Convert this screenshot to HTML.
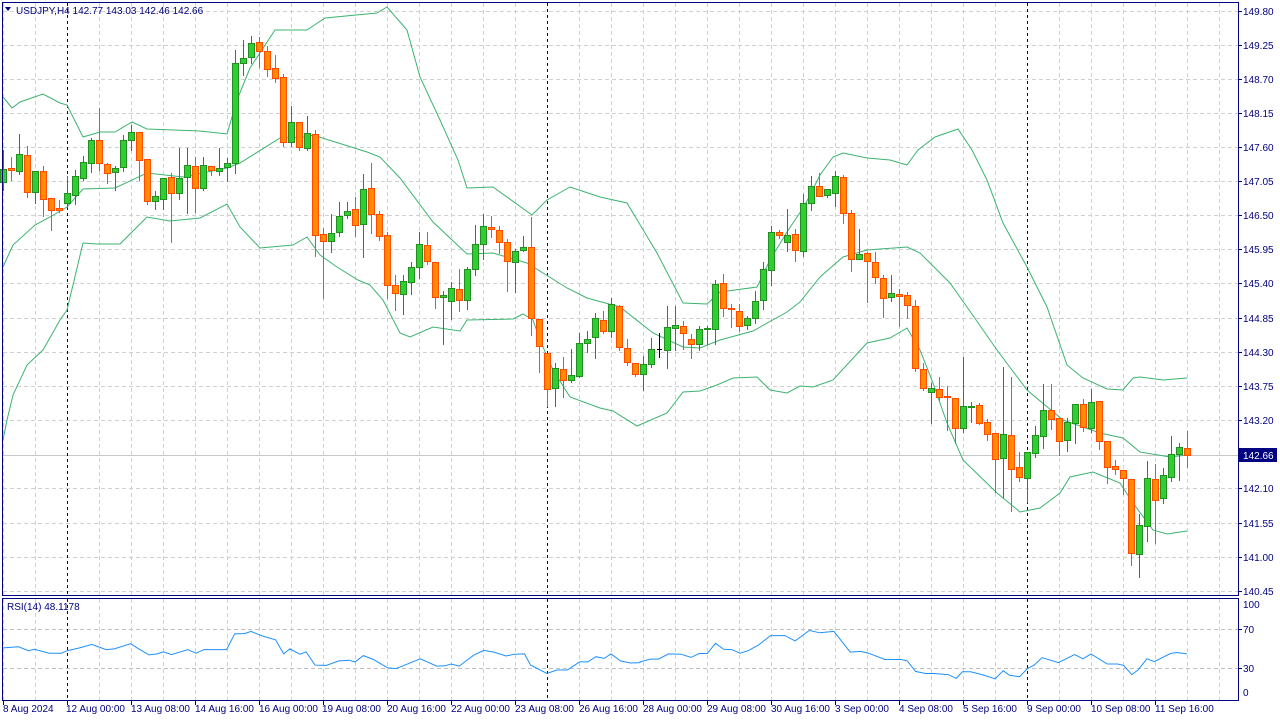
<!DOCTYPE html>
<html><head><meta charset="utf-8">
<style>
html,body{margin:0;padding:0;background:#fff;}
body{width:1280px;height:720px;overflow:hidden;position:relative;font-family:"Liberation Sans",Arial,sans-serif;}
svg{position:absolute;left:0;top:0;}
svg text{font-family:"Liberation Sans",Arial,sans-serif;font-size:10px;fill:#000080;}
</style></head><body>
<svg id="s" width="1280" height="720" xmlns="http://www.w3.org/2000/svg">
<g id="grid"></g>
<g id="bands" fill="none" stroke="#3cb371" stroke-width="1"></g>
<g id="cand"></g>
<g id="rsi" fill="none" stroke="#1e90ff" stroke-width="1"></g>
<g id="frame" fill="none" stroke="#000080" stroke-width="1">
<rect x="2.5" y="2.5" width="1236" height="593"/>
<rect x="2.5" y="598.5" width="1236" height="102"/>
</g>
<polygon points="5,7 11,7 8,11" fill="#000080"/>
<text x="16" y="14">USDJPY,H4  142.77 143.03 142.46 142.66</text>
<text x="7" y="610">RSI(14) 48.1178</text>
<g id="ticks" stroke="#000080"></g>
<text x="1243" y="15">149.80</text>
<text x="1243" y="49">149.25</text>
<text x="1243" y="83">148.70</text>
<text x="1243" y="117">148.15</text>
<text x="1243" y="151">147.60</text>
<text x="1243" y="185">147.05</text>
<text x="1243" y="219">146.50</text>
<text x="1243" y="253">145.95</text>
<text x="1243" y="287">145.40</text>
<text x="1243" y="322">144.85</text>
<text x="1243" y="356">144.30</text>
<text x="1243" y="390">143.75</text>
<text x="1243" y="424">143.20</text>
<rect x="1239" y="448" width="38" height="14" fill="#000080"/>
<text x="1243" y="459" style="fill:#fff">142.66</text>
<text x="1243" y="492">142.10</text>
<text x="1243" y="527">141.55</text>
<text x="1243" y="561">141.00</text>
<text x="1243" y="595">140.45</text>
<text x="1243" y="608">100</text>
<text x="1243" y="633">70</text>
<text x="1243" y="672">30</text>
<text x="1243" y="696">0</text>
<text x="3" y="712">8 Aug 2024</text>
<text x="66" y="712">12 Aug 00:00</text>
<text x="131" y="712">13 Aug 08:00</text>
<text x="195" y="712">14 Aug 16:00</text>
<text x="259" y="712">16 Aug 00:00</text>
<text x="322" y="712">19 Aug 08:00</text>
<text x="387" y="712">20 Aug 16:00</text>
<text x="451" y="712">22 Aug 00:00</text>
<text x="515" y="712">23 Aug 08:00</text>
<text x="579" y="712">26 Aug 16:00</text>
<text x="643" y="712">28 Aug 00:00</text>
<text x="707" y="712">29 Aug 08:00</text>
<text x="771" y="712">30 Aug 16:00</text>
<text x="835" y="712">3 Sep 00:00</text>
<text x="899" y="712">4 Sep 08:00</text>
<text x="963" y="712">5 Sep 16:00</text>
<text x="1027" y="712">9 Sep 00:00</text>
<text x="1091" y="712">10 Sep 08:00</text>
<text x="1155" y="712">11 Sep 16:00</text>
</svg>
<script>
var NS="http://www.w3.org/2000/svg";
function el(p,t,a){var e=document.createElementNS(NS,t);for(var k in a)e.setAttribute(k,a[k]);document.getElementById(p).appendChild(e);return e;}
// grid
var hy=[11,45,79,113,147,181,215,249,283,318,352,386,420,488,523,557,591];
hy.forEach(function(y){el("grid","line",{x1:3,x2:1238,y1:y+.5,y2:y+.5,stroke:"#d0d0d0","stroke-dasharray":"4,3"});el("ticks","line",{x1:1238,x2:1242,y1:y+.5,y2:y+.5});});
[629,668].forEach(function(y){el("grid","line",{x1:3,x2:1238,y1:y+.5,y2:y+.5,stroke:"#c0c0c0","stroke-dasharray":"4,3"});el("ticks","line",{x1:1238,x2:1242,y1:y+.5,y2:y+.5});});
el("grid","line",{x1:3,x2:1238,y1:455.5,y2:455.5,stroke:"#c8c8c8"});
for(var x=3;x<1238;x+=32){var nav=[67,307,547,787,1027].indexOf(x)>=0;
 el("grid","line",{x1:x+.5,x2:x+.5,y1:3,y2:595,stroke:nav?"#000080":"#d0d0d0","stroke-dasharray":nav?"3,3":"4,3"});
 el("grid","line",{x1:x+.5,x2:x+.5,y1:599,y2:700,stroke:nav?"#000080":"#d0d0d0","stroke-dasharray":nav?"3,3":"4,3"});}
for(var i=0;i<19;i++){var tx=3+64*i;el("ticks","line",{x1:tx+.5,x2:tx+.5,y1:700,y2:705});}
// bands
function pl(pts){el("bands","polyline",{points:pts.map(function(p){return p.join(",")}).join(" ")});}
pl([[3,97],[12,108],[20,102],[43,94],[60,103],[67,105],[83,137],[100,132],[115,132],[132,122],[147,129],[200,131],[227,134],[237,100],[250,68],[275,30],[307,30],[325,18],[377,13],[387,7],[407,30],[420,77],[440,120],[458,160],[467,188],[493,187],[532,215],[547,200],[570,187],[600,197],[627,203],[657,253],[683,303],[707,304],[720,292],[757,287],[770,260],[787,232],[805,205],[820,175],[833,157],[843,153],[867,158],[890,160],[907,165],[918,150],[935,137],[958,129],[972,150],[987,180],[1003,223],[1027,267],[1047,307],[1067,365],[1083,378],[1107,389],[1123,390],[1133,378],[1140,377],[1163,380],[1187,378]]);
pl([[3,267],[13,245],[35,225],[50,217],[67,207],[83,189],[115,188],[147,173],[183,177],[227,168],[240,163],[280,138],[307,137],[313,135],[367,152],[380,157],[400,178],[433,222],[467,254],[493,253],[527,263],[567,288],[587,298],[620,307],[653,333],[683,347],[700,348],[720,340],[753,331],[787,312],[800,302],[820,277],[843,257],[867,250],[907,247],[920,253],[950,283],[967,307],[997,350],[1027,390],[1063,420],[1100,433],[1123,438],[1140,452],[1170,457],[1187,455]]);
pl([[3,440],[7,420],[13,395],[27,365],[43,350],[60,320],[67,310],[83,243],[97,244],[120,244],[147,217],[170,221],[200,218],[227,204],[240,227],[260,248],[293,245],[307,237],[320,255],[337,267],[358,280],[370,285],[383,300],[400,333],[410,337],[433,327],[460,331],[467,320],[513,319],[523,314],[533,320],[540,340],[553,370],[570,397],[600,408],[613,411],[637,426],[667,413],[683,392],[700,391],[717,385],[733,378],[757,377],[770,390],[787,393],[800,386],[813,387],[833,380],[867,343],[890,338],[907,328],[920,350],[933,383],[947,423],[963,460],[997,493],[1020,512],[1040,508],[1060,493],[1070,477],[1093,472],[1120,483],[1133,503],[1153,530],[1167,534],[1187,531]]);
// candles [top,bottom,high,low,type] type 1 green 0 orange 2 black
var C=[[169,182,150,190,1],[168,170,157,180,0],[154,171,134,174,1],[155,192,146,197,0],[171,192,171,203,1],[171,199,166,216,0],[198,210,198,230,0],[208,210,200,212,0],[193,203,176,207,1],[176,195,170,204,1],
[162,178,156,180,1],[140,163,138,172,1],[140,163,108,170,0],[164,173,163,183,0],[168,172,166,190,1],[140,167,135,171,1],[132,140,125,150,1],[132,160,132,180,0],[159,201,159,204,0],[196,201,191,209,1],
[178,199,178,209,1],[177,193,173,242,0],[178,193,148,199,1],[165,177,148,213,1],[166,188,157,212,0],[165,188,157,190,1],[166,170,166,175,0],[168,171,148,175,1],[163,167,158,181,1],[63,163,50,173,1],
[58,63,40,75,1],[43,57,36,63,1],[42,51,37,67,0],[51,69,46,76,0],[68,78,55,82,0],[77,142,74,146,0],[122,142,106,146,1],[122,147,122,150,0],[133,148,116,150,1],[134,235,130,256,0],
[234,241,228,298,0],[233,241,214,252,1],[216,232,202,236,1],[211,215,202,218,1],[209,225,197,236,0],[189,224,174,257,1],[188,214,163,233,0],[214,236,211,240,0],[235,285,232,298,0],[285,293,275,310,0],
[281,294,275,314,1],[267,282,262,294,1],[244,267,232,278,1],[245,261,232,264,0],[262,297,262,308,0],[295,297,291,344,1],[288,301,282,319,1],[289,300,269,311,0],[269,300,267,309,1],[244,269,225,275,1],
[226,244,214,259,1],[227,229,216,237,0],[230,242,226,253,0],[242,261,239,291,0],[251,262,249,292,1],[247,250,236,251,1],[247,318,217,335,0],[319,346,319,372,0],[353,389,353,406,0],[368,388,363,406,1],
[369,380,357,397,0],[375,380,349,382,1],[343,376,333,377,1],[339,343,331,352,1],[318,337,313,358,1],[320,331,311,333,0],[304,331,298,337,1],[306,347,305,350,0],[348,362,339,365,0],[363,374,363,376,0],
[364,374,356,390,1],[349,364,338,367,1],[349,350,333,357,2],[327,350,306,368,1],[325,328,306,350,1],[326,333,321,349,0],[339,344,334,358,0],[329,344,326,350,1],[328,329,326,344,1],[284,329,280,344,1],
[283,308,274,316,0],[308,309,304,327,0],[311,326,304,331,0],[318,325,316,329,1],[301,318,291,323,1],[269,300,262,309,1],[232,270,226,285,1],[232,235,230,238,0],[235,242,209,251,1],[234,250,229,261,0],
[203,251,194,256,1],[186,203,176,210,1],[186,196,173,196,0],[189,195,189,197,1],[176,193,171,206,1],[177,213,175,223,0],[213,259,210,271,0],[254,259,229,259,1],[253,261,252,302,0],[262,277,252,283,0],
[278,298,275,317,0],[293,297,275,301,1],[294,296,289,326,0],[295,305,292,318,0],[306,368,300,371,0],[369,388,363,390,0],[388,392,383,423,1],[389,397,377,400,0],[396,397,386,430,0],[398,428,398,443,0],
[406,428,357,432,1],[406,407,402,422,1],[405,423,403,424,0],[422,434,419,440,0],[433,459,433,492,0],[434,458,367,497,1],[435,469,377,511,0],[467,477,452,481,0],[452,478,452,502,1],[435,453,426,457,1],
[410,436,384,448,1],[410,419,384,429,0],[418,441,418,455,0],[422,440,418,451,1],[404,423,404,443,1],[404,427,399,431,0],[402,428,389,432,1],[401,441,401,449,0],[441,467,441,483,0],[466,469,460,474,0],
[470,478,470,494,0],[479,553,479,565,0],[525,554,514,577,1],[478,526,461,541,1],[479,500,464,543,0],[475,498,468,503,1],[454,477,436,481,1],[447,454,443,480,1],[448,455,431,467,0]];
C.forEach(function(c,i){var x=3+8*i;var st=c[4]==1?"#1f8f1f":(c[4]==0?"#ff4a00":"#000");var fl=c[4]==1?"#32cd32":(c[4]==0?"#ff8c00":"#000");
 el("cand","line",{x1:x+.5,x2:x+.5,y1:c[2],y2:c[3]+1,stroke:st});
 if(c[4]==2){el("cand","line",{x1:x-2,x2:x+3,y1:c[0]+.5,y2:c[0]+.5,stroke:st});return;}
 var h=Math.max(c[1]-c[0],1);el("cand","rect",{x:x-2.5,y:c[0]+.5,width:6,height:h,fill:fl,stroke:st});});
// rsi
var A=[[8,165],[45,162],[70,173],[85,169],[120,180],[150,180],[165,173],[195,165],[225,155],[260,170],[280,168],[320,153],[340,168],[365,185],[385,182],[400,176],[420,184],[460,170],[480,180],[500,170],[555,170],[575,125],[600,124],[615,118],[640,130],[675,142],[695,182],[710,168],[735,183],[750,176],[772,214],[800,215],[830,202],[855,200],[870,205],[890,187],[915,198],[950,222],[970,224],[1000,210],[1030,196],[1070,217],[1090,216],[1105,211],[1125,217],[1160,186],[1185,172],[1210,177],[1240,188],[1260,183],[1285,182],[1300,214],[1340,238],[1365,228],[1390,228],[1420,205],[1440,205],[1460,190],[1480,195],[1497,182],[1520,202],[1545,208],[1568,207]];
var B=[[0,205],[25,197],[45,197],[70,182],[100,183],[125,192],[145,181],[165,181],[185,152],[205,169],[225,170],[245,180],[265,173],[290,157],[320,130],[355,130],[380,145],[415,115],[440,122],[475,118],[515,177],[540,175],[560,180],[600,198],[640,198],[655,202],[675,232],[700,238],[720,238],[755,241],[775,252],[790,233],[810,233],[840,242],[870,253],[890,230],[905,243],[930,247],[950,223],[965,215],[985,193],[1025,207],[1065,184],[1085,196],[1105,182],[1145,211],[1170,211],[1185,215],[1205,241],[1220,228],[1242,196],[1260,204],[1300,181],[1315,178],[1340,182]];
var pts=A.map(function(p){return [p[0]/2.45,590+p[1]/2.85]}).concat(B.map(function(p){return [640+p[0]/2.45,590+p[1]/2.85]}));
el("rsi","polyline",{points:pts.map(function(p){return p[0].toFixed(1)+","+p[1].toFixed(1)}).join(" ")});
</script>
</body></html>
